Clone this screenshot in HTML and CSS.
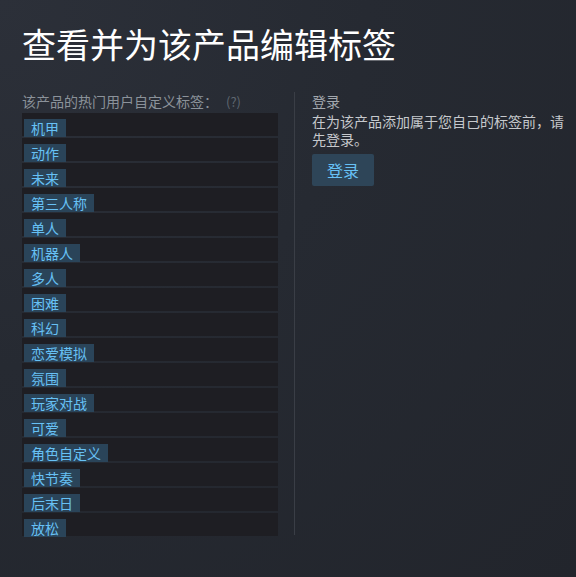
FILE: index.html
```html
<!DOCTYPE html>
<html lang="zh-CN">
<head>
    <meta charset="UTF-8">
    <meta name="viewport" content="width=device-width, initial-scale=1.0">
    <title>查看并为该产品编辑标签</title>
    <link rel="stylesheet" href="styles.css">
</head>
<body>

    <h1 class="title">查看并为该产品编辑标签</h1>

    <div class="content">
        <div class="tags-col">
            <div class="tags-label">该产品的热门用户自定义标签：<span class="help">(?)</span></div>
            <div class="tag-row"><span class="tag">机甲</span></div>
            <div class="tag-row"><span class="tag">动作</span></div>
            <div class="tag-row"><span class="tag">未来</span></div>
            <div class="tag-row"><span class="tag">第三人称</span></div>
            <div class="tag-row"><span class="tag">单人</span></div>
            <div class="tag-row"><span class="tag">机器人</span></div>
            <div class="tag-row"><span class="tag">多人</span></div>
            <div class="tag-row"><span class="tag">困难</span></div>
            <div class="tag-row"><span class="tag">科幻</span></div>
            <div class="tag-row"><span class="tag">恋爱模拟</span></div>
            <div class="tag-row"><span class="tag">氛围</span></div>
            <div class="tag-row"><span class="tag">玩家对战</span></div>
            <div class="tag-row"><span class="tag">可爱</span></div>
            <div class="tag-row"><span class="tag">角色自定义</span></div>
            <div class="tag-row"><span class="tag">快节奏</span></div>
            <div class="tag-row"><span class="tag">后末日</span></div>
            <div class="tag-row"><span class="tag">放松</span></div>
        </div>

        <div class="login-col">
            <div class="login-title">登录</div>
            <p class="login-text">在为该产品添加属于您自己的标签前，请先登录。</p>
            <button type="button" class="login-btn">登录</button>
        </div>
    </div>

</body>
</html>
```

FILE: styles.css
```css
body {
    font-family: "Noto Sans CJK SC", "Liberation Sans", sans-serif;
    background: radial-gradient(ellipse at 0 0, #2c3039 0%, #262a32 45%, #22252c 100%);
    margin: 0;
    min-height: 577px;
    padding: 0 0 0 22px;
    box-sizing: border-box;
    color: #c6c9cd;
}

.title {
    margin: 0;
    padding-top: 27px;
    font-size: 34px;
    line-height: 34px;
    font-weight: normal;
    color: #ffffff;
}

.content {
    display: flex;
    margin-top: 31px;
}

.tags-col {
    flex-shrink: 0;
    width: 256px;
}

.tags-label {
    margin-bottom: 2px;
    font-size: 14px;
    line-height: 18px;
    color: #8b929a;
}

.help {
    margin-left: 8px;
    font-size: 13px;
    color: #5f6770;
}

.tag-row {
    height: 23px;
    margin-bottom: 2px;
    padding: 2px;
    box-sizing: border-box;
    background-color: #1e1e23;
}

.tag {
    display: inline-block;
    height: 18px;
    padding: 0 7px;
    font-size: 14px;
    line-height: 18px;
    color: #67c1f5;
    background-color: #2a4459;
}

.login-col {
    flex-shrink: 0;
    margin-left: 16px;
    padding-left: 17px;
    border-left: 1px solid #3a3e46;
    width: 256px;
    height: 443px;
}

.login-title {
    font-size: 14px;
    line-height: 18px;
    color: #a3a8ae;
}

.login-text {
    margin: 2px 0 0;
    font-size: 14px;
    line-height: 18px;
    color: #c6c9cd;
}

.login-btn {
    margin-top: 6px;
    width: 62px;
    height: 32px;
    padding: 0;
    border: none;
    border-radius: 2px;
    font-family: inherit;
    font-size: 16px;
    color: #67c1f5;
    background-color: #2e4558;
    cursor: pointer;
}
```
